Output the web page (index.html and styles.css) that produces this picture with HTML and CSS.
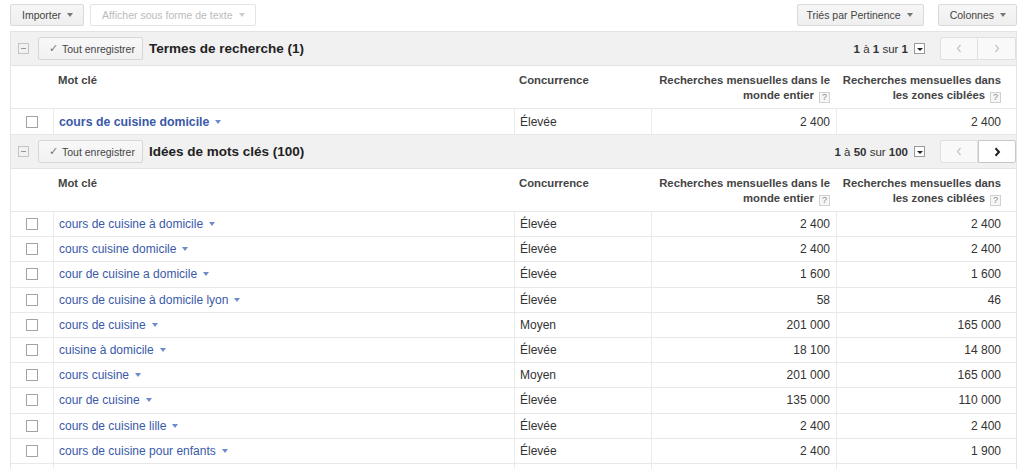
FILE: index.html
```html
<!DOCTYPE html>
<html>
<head>
	<meta charset="utf-8">
	<title>Idées de mots clés</title>
	<link rel="stylesheet" href="styles.css">
</head>
<body>
<div class="page">
	<div class="toolbar">
		<div class="tool-left">
			<button class="btn">Importer<span class="caret"></span></button>
			<button class="btn btn-off">Afficher sous forme de texte<span class="caret"></span></button>
		</div>
		<div class="tool-right">
			<button class="btn btn-sort">Triés par Pertinence<span class="caret"></span></button>
			<button class="btn btn-cols">Colonnes<span class="caret"></span></button>
		</div>
	</div>

	<div class="grid">
		<!-- termes de recherche -->
		<div class="group">
			<span class="collapse"></span>
			<button class="save-btn"><span class="tick">✓</span>Tout enregistrer</button>
			<span class="group-title">Termes de recherche (1)</span>
			<div class="pager">
				<span class="pager-text"><b>1</b> à <b>1</b> sur <b>1</b></span>
				<span class="pager-menu"></span>
				<div class="nav">
					<button class="nav-btn" disabled><svg width="6" height="9" viewBox="0 0 6 9"><path d="M4.5 1 L1.5 4.5 L4.5 8" fill="none" stroke="#c4c4c4" stroke-width="1.2"/></svg></button>
					<button class="nav-btn" disabled><svg width="6" height="9" viewBox="0 0 6 9"><path d="M1.5 1 L4.5 4.5 L1.5 8" fill="none" stroke="#c4c4c4" stroke-width="1.2"/></svg></button>
				</div>
			</div>
		</div>
		<div class="row head">
			<div class="cell"></div>
			<div class="cell">Mot clé</div>
			<div class="cell">Concurrence</div>
			<div class="cell num">Recherches mensuelles dans le<br>monde entier<span class="help">?</span></div>
			<div class="cell num last">Recherches mensuelles dans<br>les zones ciblées<span class="help">?</span></div>
		</div>
		<div class="row item term">
			<div class="cell"><span class="check"></span></div>
			<div class="cell"><a class="kw">cours de cuisine domicile</a><span class="kw-caret"></span></div>
			<div class="cell">Élevée</div>
			<div class="cell num">2 400</div>
			<div class="cell num last">2 400</div>
		</div>

		<!-- idées de mots clés -->
		<div class="group">
			<span class="collapse"></span>
			<button class="save-btn"><span class="tick">✓</span>Tout enregistrer</button>
			<span class="group-title">Idées de mots clés (100)</span>
			<div class="pager">
				<span class="pager-text"><b>1</b> à <b>50</b> sur <b>100</b></span>
				<span class="pager-menu"></span>
				<div class="nav">
					<button class="nav-btn" disabled><svg width="6" height="9" viewBox="0 0 6 9"><path d="M4.5 1 L1.5 4.5 L4.5 8" fill="none" stroke="#c4c4c4" stroke-width="1.2"/></svg></button>
					<button class="nav-btn on"><svg width="7" height="10" viewBox="0 0 7 10"><path d="M1.5 1.2 L5 5 L1.5 8.8" fill="none" stroke="#222" stroke-width="2"/></svg></button>
				</div>
			</div>
		</div>
		<div class="row head">
			<div class="cell"></div>
			<div class="cell">Mot clé</div>
			<div class="cell">Concurrence</div>
			<div class="cell num">Recherches mensuelles dans le<br>monde entier<span class="help">?</span></div>
			<div class="cell num last">Recherches mensuelles dans<br>les zones ciblées<span class="help">?</span></div>
		</div>

		<div class="row item">
			<div class="cell"><span class="check"></span></div>
			<div class="cell"><a class="kw">cours de cuisine à domicile</a><span class="kw-caret"></span></div>
			<div class="cell">Élevée</div>
			<div class="cell num">2 400</div>
			<div class="cell num last">2 400</div>
		</div>
		<div class="row item">
			<div class="cell"><span class="check"></span></div>
			<div class="cell"><a class="kw">cours cuisine domicile</a><span class="kw-caret"></span></div>
			<div class="cell">Élevée</div>
			<div class="cell num">2 400</div>
			<div class="cell num last">2 400</div>
		</div>
		<div class="row item">
			<div class="cell"><span class="check"></span></div>
			<div class="cell"><a class="kw">cour de cuisine a domicile</a><span class="kw-caret"></span></div>
			<div class="cell">Élevée</div>
			<div class="cell num">1 600</div>
			<div class="cell num last">1 600</div>
		</div>
		<div class="row item">
			<div class="cell"><span class="check"></span></div>
			<div class="cell"><a class="kw">cours de cuisine à domicile lyon</a><span class="kw-caret"></span></div>
			<div class="cell">Élevée</div>
			<div class="cell num">58</div>
			<div class="cell num last">46</div>
		</div>
		<div class="row item">
			<div class="cell"><span class="check"></span></div>
			<div class="cell"><a class="kw">cours de cuisine</a><span class="kw-caret"></span></div>
			<div class="cell">Moyen</div>
			<div class="cell num">201 000</div>
			<div class="cell num last">165 000</div>
		</div>
		<div class="row item">
			<div class="cell"><span class="check"></span></div>
			<div class="cell"><a class="kw">cuisine à domicile</a><span class="kw-caret"></span></div>
			<div class="cell">Élevée</div>
			<div class="cell num">18 100</div>
			<div class="cell num last">14 800</div>
		</div>
		<div class="row item">
			<div class="cell"><span class="check"></span></div>
			<div class="cell"><a class="kw">cours cuisine</a><span class="kw-caret"></span></div>
			<div class="cell">Moyen</div>
			<div class="cell num">201 000</div>
			<div class="cell num last">165 000</div>
		</div>
		<div class="row item">
			<div class="cell"><span class="check"></span></div>
			<div class="cell"><a class="kw">cour de cuisine</a><span class="kw-caret"></span></div>
			<div class="cell">Élevée</div>
			<div class="cell num">135 000</div>
			<div class="cell num last">110 000</div>
		</div>
		<div class="row item">
			<div class="cell"><span class="check"></span></div>
			<div class="cell"><a class="kw">cours de cuisine lille</a><span class="kw-caret"></span></div>
			<div class="cell">Élevée</div>
			<div class="cell num">2 400</div>
			<div class="cell num last">2 400</div>
		</div>
		<div class="row item">
			<div class="cell"><span class="check"></span></div>
			<div class="cell"><a class="kw">cours de cuisine pour enfants</a><span class="kw-caret"></span></div>
			<div class="cell">Élevée</div>
			<div class="cell num">2 400</div>
			<div class="cell num last">1 900</div>
		</div>
		<!-- ligne suivante, coupée par le bas de la fenêtre -->
		<div class="row item">
			<div class="cell"></div>
			<div class="cell"></div>
			<div class="cell"></div>
			<div class="cell num"></div>
			<div class="cell num last"></div>
		</div>
	</div>
</div>
</body>
</html>
```

FILE: styles.css
```css
html, body{
	margin: 0px;
	padding: 0px;
	background: #fff;
	overflow: hidden;
}

body{
	font-family: "Liberation Sans", Arial, sans-serif;
	font-size: 12px;
	color: #333;
}

.page{
	padding: 0px 7px 0px 10px;
}

/* barre d'outils */

.toolbar{
	display: flex;
	justify-content: space-between;
	align-items: flex-start;
	height: 32px;
	padding-top: 4px;
	box-sizing: border-box;
	border-bottom: 1px solid #e3e3e3;
}

.tool-left, .tool-right{
	display: flex;
}

.tool-left{
	gap: 6px;
}

.tool-right{
	gap: 14px;
}

.btn{
	display: flex;
	align-items: center;
	height: 22px;
	box-sizing: border-box;
	padding: 0px 10px 0px 11px;
	margin: 0px;
	border: 1px solid #d9d9d9;
	border-radius: 2px;
	background: linear-gradient(#f6f6f6, #efefef);
	font-family: "Liberation Sans", Arial, sans-serif;
	font-size: 10.5px;
	color: #444;
}

.btn-sort{
	padding-left: 8px;
}

.btn-cols{
	padding-left: 11px;
}

.caret{
	width: 0px;
	height: 0px;
	border-top: 4px solid #777;
	border-left: 3.5px solid transparent;
	border-right: 3.5px solid transparent;
	margin-left: 6px;
}

.btn-off{
	background: #fff;
	border-color: #e3e3e3;
	color: #bbb;
}

.btn-off .caret{
	border-top-color: #ccc;
}

/* tableau */

.grid{
	width: 1007px;
	border-left: 1px solid #e5e5e5;
	border-right: 1px solid #e5e5e5;
	box-sizing: border-box;
}

.group{
	display: flex;
	align-items: center;
	height: 34px;
	box-sizing: border-box;
	padding: 0px 0px 0px 7px;
	background: #f1f1f1;
	border-bottom: 1px solid #e3e3e3;
}

.collapse{
	width: 11px;
	height: 11px;
	box-sizing: border-box;
	border: 1px solid #c4c4c4;
	position: relative;
	margin-right: 9px;
}

.collapse::after{
	content: '';
	position: absolute;
	left: 2px;
	top: 4px;
	width: 5px;
	height: 1px;
	background: #999;
}

.save-btn{
	display: flex;
	align-items: center;
	width: 105px;
	height: 23px;
	box-sizing: border-box;
	padding: 0px 0px 0px 10px;
	margin: 0px;
	border: 1px solid #d6d6d6;
	border-radius: 2px;
	background: linear-gradient(#f8f8f8, #f1f1f1);
	font-family: "Liberation Sans", Arial, sans-serif;
	font-size: 10.5px;
	color: #444;
}

.tick{
	color: #777;
	font-size: 11px;
	margin-right: 4px;
}

.group-title{
	margin-left: 6px;
	font-size: 13.5px;
	font-weight: bold;
	color: #222;
}

.pager{
	margin-left: auto;
	display: flex;
	align-items: center;
}

.pager-text{
	font-size: 11.5px;
	color: #333;
}

.pager-menu{
	width: 11px;
	height: 11px;
	box-sizing: border-box;
	border: 1px solid #999;
	background: #fff;
	margin-left: 6px;
	display: flex;
	align-items: center;
	justify-content: center;
}

.pager-menu::after{
	content: '';
	border-top: 3px solid #222;
	border-left: 3px solid transparent;
	border-right: 3px solid transparent;
	margin-top: 1px;
}

.nav{
	display: flex;
	margin-left: 15px;
}

.nav-btn{
	width: 38px;
	height: 23px;
	margin: 0px;
	padding: 0px;
	display: flex;
	align-items: center;
	justify-content: center;
	border: 1px solid #e0e0e0;
	background: #f9f9f9;
}

.nav-btn:first-child{
	border-radius: 2px 0px 0px 2px;
}

.nav-btn:last-child{
	border-left: none;
	border-radius: 0px 2px 2px 0px;
}

.nav-btn.on{
	background: #fff;
	border-color: #c8c8c8;
	border-left: 1px solid #c8c8c8;
}

/* lignes */

.row{
	display: grid;
	grid-template-columns: 42px 461px 137px 185px 180px;
	box-sizing: border-box;
	border-bottom: 1px solid #e8e8e8;
}

.cell{
	padding: 0px 6px 0px 5px;
	white-space: nowrap;
}

.row .cell:first-child{
	padding: 0px;
}

.cell.num{
	text-align: right;
	padding-right: 6px;
}

.cell.last{
	padding-right: 15px;
}

.head{
	height: 43px;
}

.head .cell{
	padding-top: 7px;
	font-size: 11.3px;
	line-height: 15px;
	font-weight: bold;
	color: #444;
}

.head .cell.num{
	padding-right: 6px;
}

.head .cell.last{
	padding-right: 15px;
}

.help{
	display: inline-block;
	width: 11px;
	height: 11px;
	box-sizing: border-box;
	border: 1px solid #d0d0d0;
	background: #f6f6f6;
	margin-left: 5px;
	font-size: 9px;
	line-height: 9px;
	text-align: center;
	font-weight: normal;
	color: #888;
	vertical-align: -1px;
}

.item{
	height: 25.2px;
}

.item.term{
	height: 26px;
}

.item .cell{
	display: flex;
	align-items: center;
}

.item .cell + .cell{
	border-left: 1px solid #ebebeb;
}

.item .cell.num{
	justify-content: flex-end;
}

.item .cell:first-child{
	justify-content: center;
}

.check{
	width: 12px;
	height: 12px;
	box-sizing: border-box;
	border: 1px solid #a3a3a3;
	background: #fff;
}

.kw{
	color: #3a59a8;
	text-decoration: none;
}

.term .kw{
	font-weight: bold;
	font-size: 12.3px;
}

.kw-caret{
	width: 0px;
	height: 0px;
	border-top: 4px solid #6d8bcb;
	border-left: 3.5px solid transparent;
	border-right: 3.5px solid transparent;
	margin-left: 6px;
}
```
